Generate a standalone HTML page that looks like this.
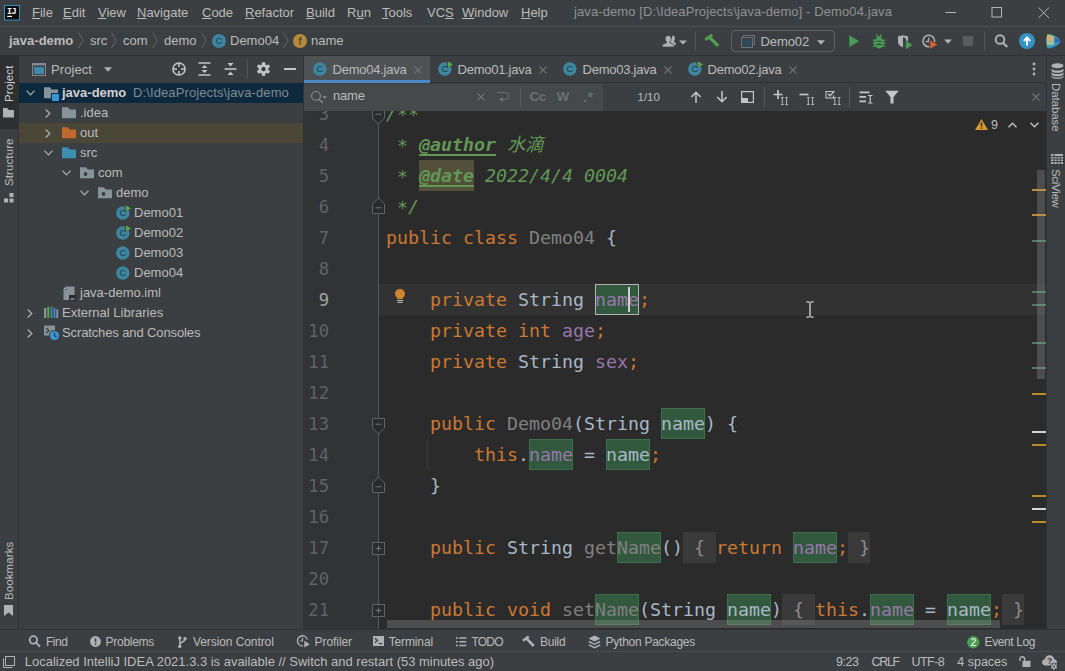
<!DOCTYPE html>
<html><head><meta charset="utf-8"><title>java-demo - Demo04.java</title>
<style>
*{box-sizing:border-box;margin:0;padding:0}
html,body{width:1065px;height:671px;overflow:hidden;background:#3c3f41}
body{position:relative;font-family:"Liberation Sans","Noto Sans CJK SC",sans-serif;font-size:13px;color:#bbbbbb}
.abs{position:absolute}
.t{position:absolute;white-space:nowrap;line-height:16px}
svg{position:absolute;overflow:visible}
u{text-decoration:underline;text-underline-offset:1px}
/* regions */
#menubar{left:0;top:0;width:1065px;height:26px;background:#3c3f41}
#navbar{left:0;top:26px;width:1065px;height:30px;background:#3c3f41;border-top:1px solid #4b4e50;border-bottom:1px solid #323232}
#lstripe{left:0;top:56px;width:19px;height:573px;background:#3c3f41;border-right:1px solid #323232}
#rstripe{left:1046px;top:56px;width:19px;height:573px;background:#3c3f41;border-left:1px solid #323232}
#proj{left:19px;top:56px;width:285px;height:573px;background:#3c3f41;border-right:1px solid #323232}
#tabs{left:304px;top:56px;width:742px;height:27px;background:#3c3f41;border-bottom:1px solid #323232}
#find{left:304px;top:84px;width:742px;height:27px;background:#3c3f41}
#editor{left:304px;top:111px;width:742px;height:518px;background:#2b2b2b;overflow:hidden}
#btools{left:0;top:629px;width:1065px;height:22px;background:#3c3f41;border-top:1px solid #323232}
#status{left:0;top:651px;width:1065px;height:20px;background:#3c3f41;border-top:1px solid #494b4c}
.code{position:absolute;left:82px;white-space:pre;font-family:"DejaVu Sans Mono","Liberation Mono","Noto Sans CJK SC",monospace;font-size:18.27px;line-height:31px;height:31px;color:#a9b7c6}
.ln{position:absolute;left:0;width:25px;text-align:right;white-space:pre;font-family:"DejaVu Sans Mono","Liberation Mono",monospace;font-size:17.2px;line-height:31px;height:31px;color:#606366}
.k{color:#cc7832}.f{color:#9876aa}.g{color:#808080}.d{color:#629755;font-style:italic}
.dt{color:#629755;font-style:italic;font-weight:bold;text-decoration:underline;text-underline-offset:3px;text-decoration-thickness:1.5px}.as{font-weight:normal;position:relative;top:1px}
.m{background:#32593d;outline:1px solid #3d6b48;outline-offset:-1px}
.fbt{color:#8c8c8c}.sh{position:relative;top:0px}.ln span{position:relative;top:1px}.ln.cur{color:#a4a3a3}
</style></head><body>
<div id="menubar" class="abs">
<svg style="left:4px;top:4.500px" width="16" height="16" viewBox="0 0 16 16"><rect x="0" y="0" width="16" height="15.500" fill="#3592c4"/><rect x="1" y="1" width="14" height="13.500" fill="#0b0b0c"/><rect x="3.200" y="10.800" width="4.800" height="1.200" fill="#fff"/><text x="3" y="8.800" font-family="Liberation Mono,monospace" font-weight="bold" font-size="8.400" fill="#fff" letter-spacing="-0.600">IJ</text></svg>
<span class="t" style="left:32px;top:5px"><u>F</u>ile</span>
<span class="t" style="left:63px;top:5px"><u>E</u>dit</span>
<span class="t" style="left:98px;top:5px"><u>V</u>iew</span>
<span class="t" style="left:137px;top:5px"><u>N</u>avigate</span>
<span class="t" style="left:202px;top:5px"><u>C</u>ode</span>
<span class="t" style="left:245px;top:5px"><u>R</u>efactor</span>
<span class="t" style="left:306px;top:5px"><u>B</u>uild</span>
<span class="t" style="left:347px;top:5px">R<u>u</u>n</span>
<span class="t" style="left:382px;top:5px"><u>T</u>ools</span>
<span class="t" style="left:427px;top:5px">VC<u>S</u></span>
<span class="t" style="left:462px;top:5px"><u>W</u>indow</span>
<span class="t" style="left:521px;top:5px"><u>H</u>elp</span>
<span class="t" style="left:574px;top:4px;color:#8f9192;letter-spacing:0.1px">java-demo [D:\IdeaProjects\java-demo] - Demo04.java</span>
<svg style="left:945px;top:5px" width="110" height="16" viewBox="0 0 110 16"><path d="M0.500 7.500H11" stroke="#b4b4b4" stroke-width="1" fill="none"/><rect x="47" y="2.500" width="9.500" height="9.500" stroke="#b4b4b4" stroke-width="1" fill="none"/><path d="M93.500 2.500L104 13M104 2.500L93.500 13" stroke="#b4b4b4" stroke-width="1" fill="none"/></svg>
</div>
<div id="navbar" class="abs">
<span class="t" style="left:9px;top:6px;font-weight:bold">java-demo</span><svg style="left:77px;top:5px" width="8" height="17" viewBox="0 0 8 17"><path d="M1.500 0.500L6 8.300L1.500 16" stroke="#63666a" stroke-width="1" fill="none"/></svg>
<span class="t" style="left:90px;top:6px">src</span><svg style="left:110px;top:5px" width="8" height="17" viewBox="0 0 8 17"><path d="M1.500 0.500L6 8.300L1.500 16" stroke="#63666a" stroke-width="1" fill="none"/></svg>
<span class="t" style="left:123px;top:6px">com</span><svg style="left:151px;top:5px" width="8" height="17" viewBox="0 0 8 17"><path d="M1.500 0.500L6 8.300L1.500 16" stroke="#63666a" stroke-width="1" fill="none"/></svg>
<span class="t" style="left:164px;top:6px">demo</span><svg style="left:200px;top:5px" width="8" height="17" viewBox="0 0 8 17"><path d="M1.500 0.500L6 8.300L1.500 16" stroke="#63666a" stroke-width="1" fill="none"/></svg>
<svg style="left:212px;top:7px" width="14" height="14" viewBox="0 0 14 14"><circle cx="7" cy="7" r="7" fill="#3e86a0"/><text x="7" y="10.3" text-anchor="middle" font-family="Liberation Sans,sans-serif" font-size="9.300" fill="#243b47">C</text></svg>
<span class="t" style="left:230px;top:6px">Demo04</span><svg style="left:282px;top:5px" width="8" height="17" viewBox="0 0 8 17"><path d="M1.500 0.500L6 8.300L1.500 16" stroke="#63666a" stroke-width="1" fill="none"/></svg>
<svg style="left:293px;top:7px" width="14" height="14" viewBox="0 0 14 14"><circle cx="7" cy="7" r="7" fill="#b58a3d"/><text x="7" y="10.700" text-anchor="middle" font-family="Liberation Sans,sans-serif" font-size="11" fill="#43351c">f</text></svg>
<span class="t" style="left:311px;top:6px">name</span>
<!-- right toolbar -->
<svg style="left:661px;top:8px" width="28" height="13" viewBox="0 0 28 13"><path d="M11.800 0.400c1.300 0 2.100 1.300 2.100 3c0 1.100-0.400 2-0.900 2.600v0.800l2.400 2.200l-1.500 1.300l-5-3z" fill="#afb1b3"/><path d="M7.200 0.500c1.800 0 3 1.400 3 3.300c0 1.300-0.500 2.400-1.300 3v1l3.400 1.500c0.600 0.300 0.900 0.800 0.900 1.400V12H1.200v-1.300c0-0.600 0.300-1.100 0.900-1.400l3.400-1.500v-1c-0.800-0.600-1.300-1.700-1.300-3c0-1.900 1.200-3.300 3-3.300z" fill="#afb1b3" stroke="#3c3f41" stroke-width="0.700"/><path d="M18 5.500h8l-4 4z" fill="#afb1b3"/></svg>
<div class="abs" style="left:695px;top:4px;width:1px;height:20px;background:#515456"></div>
<svg style="left:704px;top:7px" width="16" height="14" viewBox="0 0 16 14"><path d="M1.400 5.800L8.300 0.900" stroke="#50a150" stroke-width="3" fill="none"/><path d="M5.800 3.600L14.100 11.800" stroke="#50a150" stroke-width="3.100" fill="none"/></svg>
<div class="abs" style="left:731px;top:3px;width:104px;height:22px;border:1px solid #5e6162;border-radius:4px"></div>
<svg style="left:741px;top:8px" width="14" height="13" viewBox="0 0 14 13"><rect x="2.500" y="0.500" width="11" height="9" fill="none" stroke="#6e7173"/><rect x="0.500" y="2.500" width="11" height="10" fill="#3c3f41" stroke="#6e7173"/><rect x="1.500" y="4.500" width="9" height="7" fill="#2e4a5c"/></svg>
<span class="t" style="left:760.500px;top:7px;letter-spacing:-0.1px">Demo02</span>
<svg style="left:817px;top:13px" width="8" height="5" viewBox="0 0 8 5"><path d="M0 0.300h8l-4 4.400z" fill="#afb1b3"/></svg>
<svg style="left:849px;top:8px" width="10.500" height="12.400" viewBox="0 0 11 13" preserveAspectRatio="none"><path d="M0.300 0.300L10.600 6.500L0.300 12.700z" fill="#499c54"/></svg>
<svg style="left:872px;top:7px" width="14" height="15" viewBox="0 0 14 15"><path d="M4.200 0.400l1.700 2.300M9.800 0.400l-1.700 2.300" stroke="#499c54" stroke-width="1.200"/><ellipse cx="7" cy="9.100" rx="4.700" ry="5.300" fill="#499c54"/><path d="M4.600 2.400h4.800v2.800h-4.800z" fill="#499c54"/><path d="M0.900 6.200h2M0.900 9.200h2M0.900 12.200h2M11.100 6.200h2M11.100 9.200h2M11.100 12.200h2" stroke="#499c54" stroke-width="1.400"/><path d="M4.600 7.300h4.800M4.600 10.400h4.800" stroke="#3c3f41" stroke-width="1.100"/></svg>
<svg style="left:897px;top:8px" width="17" height="15" viewBox="0 0 17 15"><path d="M1 1.200C3 1 4.500 0.700 6 0.200C7.500 0.700 9 1 11 1.200V7c0 2.500-2.300 4.300-5 5.300C3.300 11.300 1 9.500 1 7z" fill="#afb1b3"/><path d="M6 2.300c1 0.300 1.700 0.500 2.800 0.600V11c-0.800 0.500-1.800 1-2.800 1.300z" fill="#3c3f41"/><path d="M8.500 5.300L16.300 10L8.500 14.700z" fill="#499c54" stroke="#3c3f41" stroke-width="0.800"/></svg>
<svg style="left:922px;top:7px" width="32" height="16" viewBox="0 0 32 16"><circle cx="6.800" cy="7" r="5.800" fill="none" stroke="#afb1b3" stroke-width="1.500"/><path d="M6.800 3.500V7.500H3.800" stroke="#afb1b3" stroke-width="1.300" fill="none"/><path d="M7.800 5.800L15.800 10.500L7.800 15.300z" fill="#d9622b" stroke="#3c3f41" stroke-width="0.800"/><path d="M22 5.500h8l-4 4.300z" fill="#afb1b3"/></svg>
<div class="abs" style="left:963px;top:9px;width:10px;height:10px;background:#5a5c5d"></div>
<div class="abs" style="left:984px;top:4px;width:1px;height:20px;background:#515456"></div>
<svg style="left:993px;top:7px" width="16" height="15" viewBox="0 0 16 15"><circle cx="7" cy="5.500" r="4.300" fill="none" stroke="#afb1b3" stroke-width="1.900"/><path d="M10 8.700L14.300 13.100" stroke="#afb1b3" stroke-width="2.100"/></svg>
<svg style="left:1019px;top:6px" width="16" height="16" viewBox="0 0 16 16"><circle cx="8" cy="8" r="8" fill="#3592c4"/><path d="M8 12.500V5M4.800 8L8 4.500L11.200 8" stroke="#fff" stroke-width="1.900" fill="none"/></svg>
<svg style="left:1046px;top:7px" width="15" height="15" viewBox="0 0 15 15"><path d="M1.500 0.300C6 -0.300 12.500 2.500 14.500 7.300C12.500 11.500 6 14.800 1.500 14.300C0 10 0 5 1.500 0.300z" fill="#2d9bd8"/><path d="M1.500 0.300C4 0.200 7 1.500 8.300 3.300C8.800 5 8.800 6 8.500 7.500L0.500 7.500C0.400 5 0.700 2.500 1.500 0.300z" fill="#c9b27c"/><path d="M0.500 7.500L8.500 7.500C8.300 9 7.800 10 7 11L1 11.500z" fill="#a7c194"/><path d="M1 11.500L7 11C5.500 12.800 3.500 13.800 1.500 14.300z" fill="#3aa0a8"/><path d="M8.300 3.300C10.500 4 13 5.500 14.500 7.300C13 8.500 11 9 8.500 8.500z" fill="#2d6fb5"/><path d="M1.500 0.300C4 0.200 6.500 1 8 2.500" stroke="#3f9a5a" stroke-width="0.800" fill="none"/></svg>
</div>
<div id="lstripe" class="abs"></div>
<!-- left stripe content -->
<div class="abs" style="left:0;top:56px;width:19px;height:73px;background:#2d2f30"></div>
<span class="t" style="left:2px;top:65px;width:14px;height:37px;line-height:14px;font-size:11.5px;writing-mode:vertical-rl;transform:rotate(180deg);color:#d0d0d0;letter-spacing:0.1px">Project</span>
<svg style="left:3px;top:108px" width="11" height="9.500" viewBox="0 0 12 10" preserveAspectRatio="none"><path d="M0 0H4.500L6.300 2H12V10H0z" fill="#afb1b3"/></svg>
<span class="t" style="left:2px;top:138px;width:14px;height:48px;line-height:14px;font-size:11.5px;writing-mode:vertical-rl;transform:rotate(180deg);letter-spacing:0.1px">Structure</span>
<svg style="left:4px;top:193px" width="10" height="10" viewBox="0 0 10 10"><rect x="5.500" y="0" width="4" height="4" fill="#afb1b3"/><rect x="0" y="5.500" width="4" height="4" fill="#afb1b3"/><rect x="5.500" y="5.500" width="4" height="4" fill="#afb1b3"/></svg>
<span class="t" style="left:1.700px;top:541px;width:14px;height:59px;line-height:14px;font-size:11.5px;writing-mode:vertical-rl;transform:rotate(180deg);letter-spacing:0.1px">Bookmarks</span>
<svg style="left:4px;top:605px" width="9" height="11" viewBox="0 0 8 11" preserveAspectRatio="none"><path d="M0 0H8V11L4 7.500L0 11z" fill="#afb1b3"/></svg>
<div id="proj" class="abs"></div>
<!-- project panel content -->
<div class="abs" style="left:19px;top:83px;width:284px;height:20px;background:#0d293e"></div>
<div class="abs" style="left:19px;top:123px;width:284px;height:20px;background:#4a4638"></div>
<svg style="left:32px;top:63px" width="14" height="13" viewBox="0 0 14 13"><rect x="0.500" y="0.500" width="13" height="12" fill="none" stroke="#7f8b91"/><rect x="0.500" y="0.500" width="13" height="2" fill="#7f8b91"/><rect x="2" y="4" width="10" height="7" fill="#3f8aab"/></svg>
<span class="t" style="left:51px;top:62px;letter-spacing:0.08px">Project</span>
<svg style="left:104px;top:67px" width="8" height="5" viewBox="0 0 8 5"><path d="M0 0.300h8l-4 4.400z" fill="#afb1b3"/></svg>
<svg style="left:172px;top:62px" width="14" height="14" viewBox="0 0 14 14"><circle cx="7" cy="7" r="6.100" fill="none" stroke="#c3c5c6" stroke-width="1.500"/><path d="M7 1V5M7 9V13M1 7H5M9 7H13" stroke="#c3c5c6" stroke-width="1.500"/></svg>
<svg style="left:198px;top:62px" width="13" height="14" viewBox="0 0 13 14"><path d="M0.500 1H12.500M0.500 13H12.500" stroke="#c3c5c6" stroke-width="1.600"/><path d="M3.500 6L6.500 3L9.500 6zM3.500 8L6.500 11L9.500 8z" fill="#c3c5c6"/></svg>
<svg style="left:224px;top:62px" width="13" height="14" viewBox="0 0 13 14"><path d="M0.500 7H12.500" stroke="#c3c5c6" stroke-width="1.600"/><path d="M3.500 1L6.500 4.500L9.500 1zM3.500 13L6.500 9.500L9.500 13z" fill="#c3c5c6"/></svg>
<div class="abs" style="left:247px;top:59px;width:1px;height:20px;background:#515456"></div>
<svg style="left:257px;top:62px" width="13" height="14" viewBox="0 0 13 14"><g transform="translate(6.500 7)"><g fill="#c3c5c6"><rect x="-1.700" y="-6.800" width="3.400" height="13.600" rx="0.600"/><rect x="-1.700" y="-6.800" width="3.400" height="13.600" rx="0.600" transform="rotate(60)"/><rect x="-1.700" y="-6.800" width="3.400" height="13.600" rx="0.600" transform="rotate(120)"/><circle r="4.800"/></g><circle r="2.200" fill="#3c3f41"/></g></svg>
<div class="abs" style="left:284px;top:68px;width:12px;height:2px;background:#c3c5c6"></div>
<svg style="left:26px;top:90px" width="9" height="6" viewBox="0 0 9 6"><path d="M0.500 0.700L4.500 4.800L8.500 0.700" stroke="#afb1b3" stroke-width="1.200" fill="none"/></svg>
<svg style="left:44px;top:87px" width="14" height="12" viewBox="0 0 14 12"><path d="M0 0.300H5.800L7.800 2.600H14V11.300H0z" fill="#87939a"/><rect x="7" y="6" width="8" height="8" fill="#0d293e"/><rect x="8" y="7" width="7" height="7" fill="#3a95d6"/></svg>
<span class="t" style="left:62px;top:85px;font-weight:bold;color:#d0d0d0">java-demo</span>
<span class="t" style="left:133px;top:85px;color:#7f8b91;letter-spacing:0.11px">D:\IdeaProjects\java-demo</span>
<svg style="left:45px;top:109px" width="6" height="9" viewBox="0 0 6 9"><path d="M0.700 0.500L4.800 4.500L0.700 8.500" stroke="#afb1b3" stroke-width="1.200" fill="none"/></svg>
<svg style="left:62px;top:107px" width="14" height="12" viewBox="0 0 14 12"><path d="M0 0.300H5.800L7.800 2.600H14V11.300H0z" fill="#87939a"/></svg>
<span class="t" style="left:80px;top:105px;">.idea</span>
<svg style="left:45px;top:129px" width="6" height="9" viewBox="0 0 6 9"><path d="M0.700 0.500L4.800 4.500L0.700 8.500" stroke="#afb1b3" stroke-width="1.200" fill="none"/></svg>
<svg style="left:62px;top:127px" width="14" height="12" viewBox="0 0 14 12"><path d="M0 0.300H5.800L7.800 2.600H14V11.300H0z" fill="#c0682f"/></svg>
<span class="t" style="left:80px;top:125px;">out</span>
<svg style="left:44px;top:150px" width="9" height="6" viewBox="0 0 9 6"><path d="M0.500 0.700L4.500 4.800L8.500 0.700" stroke="#afb1b3" stroke-width="1.200" fill="none"/></svg>
<svg style="left:62px;top:147px" width="14" height="12" viewBox="0 0 14 12"><path d="M0 0.300H5.800L7.800 2.600H14V11.300H0z" fill="#3d8eb1"/></svg>
<span class="t" style="left:80px;top:145px;">src</span>
<svg style="left:62px;top:170px" width="9" height="6" viewBox="0 0 9 6"><path d="M0.500 0.700L4.500 4.800L8.500 0.700" stroke="#afb1b3" stroke-width="1.200" fill="none"/></svg>
<svg style="left:80px;top:167px" width="14" height="12" viewBox="0 0 14 12"><path d="M0 0.300H5.800L7.800 2.600H14V11.300H0z" fill="#87939a"/><circle cx="5.500" cy="7" r="1.900" fill="#3c3f41"/></svg>
<span class="t" style="left:98px;top:165px;">com</span>
<svg style="left:80px;top:190px" width="9" height="6" viewBox="0 0 9 6"><path d="M0.500 0.700L4.500 4.800L8.500 0.700" stroke="#afb1b3" stroke-width="1.200" fill="none"/></svg>
<svg style="left:98px;top:187px" width="14" height="12" viewBox="0 0 14 12"><path d="M0 0.300H5.800L7.800 2.600H14V11.300H0z" fill="#87939a"/><circle cx="5.500" cy="7" r="1.900" fill="#3c3f41"/></svg>
<span class="t" style="left:116px;top:185px;">demo</span>
<svg style="left:116px;top:205.3px" width="15" height="15" viewBox="0 0 15 15"><circle cx="6.800" cy="8" r="6.700" fill="#3e86a0"/><text x="6.800" y="11.300" text-anchor="middle" font-family="Liberation Sans,sans-serif" font-size="9.300" fill="#243b47">C</text><path d="M8.800 0L15 3.600L8.800 7.200z" fill="#3c3f41"/><path d="M9.800 0.200L15 3.500L9.800 6.600z" fill="#57a64a"/></svg>
<span class="t" style="left:134px;top:205px;">Demo01</span>
<svg style="left:116px;top:225.3px" width="15" height="15" viewBox="0 0 15 15"><circle cx="6.800" cy="8" r="6.700" fill="#3e86a0"/><text x="6.800" y="11.300" text-anchor="middle" font-family="Liberation Sans,sans-serif" font-size="9.300" fill="#243b47">C</text><path d="M8.800 0L15 3.600L8.800 7.200z" fill="#3c3f41"/><path d="M9.800 0.200L15 3.500L9.800 6.600z" fill="#57a64a"/></svg>
<span class="t" style="left:134px;top:225px;">Demo02</span>
<svg style="left:116px;top:245.3px" width="15" height="15" viewBox="0 0 15 15"><circle cx="6.800" cy="8" r="6.700" fill="#3e86a0"/><text x="6.800" y="11.300" text-anchor="middle" font-family="Liberation Sans,sans-serif" font-size="9.300" fill="#243b47">C</text></svg>
<span class="t" style="left:134px;top:245px;">Demo03</span>
<svg style="left:116px;top:265.3px" width="15" height="15" viewBox="0 0 15 15"><circle cx="6.800" cy="8" r="6.700" fill="#3e86a0"/><text x="6.800" y="11.300" text-anchor="middle" font-family="Liberation Sans,sans-serif" font-size="9.300" fill="#243b47">C</text></svg>
<span class="t" style="left:134px;top:265px;">Demo04</span>
<svg style="left:62px;top:286px" width="14" height="15" viewBox="0 0 14 15"><path d="M5 0.500H12.500V14H1.500V4z" fill="#87939a"/><path d="M1.500 4L5 0.500V4z" fill="#3c3f41"/><path d="M1 3.500L4.500 0V3.500z" fill="#a5b0b6"/><rect x="7" y="9" width="7" height="6" fill="#2b2b2b"/><rect x="8.500" y="12.500" width="4" height="1" fill="#d0d0d0"/></svg>
<span class="t" style="left:80px;top:285px;">java-demo.iml</span>
<svg style="left:27px;top:309px" width="6" height="9" viewBox="0 0 6 9"><path d="M0.700 0.500L4.800 4.500L0.700 8.500" stroke="#afb1b3" stroke-width="1.200" fill="none"/></svg>
<svg style="left:44px;top:306px" width="15" height="13" viewBox="0 0 15 13"><rect x="0" y="2" width="2.200" height="10" fill="#87939a"/><rect x="3.200" y="0.700" width="2.200" height="11.300" fill="#62a043"/><rect x="6.800" y="0.700" width="1.600" height="11.300" fill="#3a8fc4"/><rect x="9.500" y="2" width="1.900" height="10" fill="#3a8fc4"/><rect x="12.300" y="3.500" width="1.900" height="8.500" fill="#87939a"/></svg>
<span class="t" style="left:62px;top:305px;">External Libraries</span>
<svg style="left:27px;top:329px" width="6" height="9" viewBox="0 0 6 9"><path d="M0.700 0.500L4.800 4.500L0.700 8.500" stroke="#afb1b3" stroke-width="1.200" fill="none"/></svg>
<svg style="left:44px;top:325px" width="16" height="16" viewBox="0 0 16 16"><rect x="0" y="0.500" width="11" height="10" fill="#87939a"/><path d="M2 3L5 5.500L2 8" stroke="#3c3f41" stroke-width="1.300" fill="none"/><path d="M6 8.500H9" stroke="#3c3f41" stroke-width="1.300"/><circle cx="10.500" cy="10.500" r="5.500" fill="#3c3f41"/><circle cx="10.500" cy="10.500" r="4.600" fill="#3a95d6"/><path d="M10.500 7.500V10.800L12.500 12" stroke="#3c3f41" stroke-width="1.200" fill="none"/></svg>
<span class="t" style="left:62px;top:325px;letter-spacing:-0.12px">Scratches and Consoles</span>

<div id="tabs" class="abs"></div>
<!-- tabs content -->
<div class="abs" style="left:304px;top:56px;width:126px;height:26px;background:#4e5254"></div>
<div class="abs" style="left:304px;top:80px;width:126px;height:3px;background:#4a88c7"></div>
<svg style="left:313px;top:61px" width="15" height="15" viewBox="0 0 15 15"><circle cx="6.800" cy="8" r="6.700" fill="#3e86a0"/><text x="6.800" y="11.300" text-anchor="middle" font-family="Liberation Sans,sans-serif" font-size="9.300" fill="#243b47">C</text></svg>
<span class="t" style="left:332.5px;top:62px;letter-spacing:-0.24px">Demo04.java</span>
<svg style="left:413.8px;top:65.5px" width="8" height="8" viewBox="0 0 8 8"><path d="M0.500 0.500L7.500 7.500M7.500 0.500L0.500 7.500" stroke="#6e7173" stroke-width="1.100"/></svg>
<svg style="left:438px;top:61px" width="15" height="15" viewBox="0 0 15 15"><circle cx="6.800" cy="8" r="6.700" fill="#3e86a0"/><text x="6.800" y="11.300" text-anchor="middle" font-family="Liberation Sans,sans-serif" font-size="9.300" fill="#243b47">C</text><path d="M8.800 0L15 3.600L8.800 7.200z" fill="#3c3f41"/><path d="M9.800 0.200L15 3.500L9.800 6.600z" fill="#57a64a"/></svg>
<span class="t" style="left:457.5px;top:62px;letter-spacing:-0.24px">Demo01.java</span>
<svg style="left:538.8px;top:65.5px" width="8" height="8" viewBox="0 0 8 8"><path d="M0.500 0.500L7.500 7.500M7.500 0.500L0.500 7.500" stroke="#6e7173" stroke-width="1.100"/></svg>
<svg style="left:563px;top:61px" width="15" height="15" viewBox="0 0 15 15"><circle cx="6.800" cy="8" r="6.700" fill="#3e86a0"/><text x="6.800" y="11.300" text-anchor="middle" font-family="Liberation Sans,sans-serif" font-size="9.300" fill="#243b47">C</text></svg>
<span class="t" style="left:582.5px;top:62px;letter-spacing:-0.24px">Demo03.java</span>
<svg style="left:663.8px;top:65.5px" width="8" height="8" viewBox="0 0 8 8"><path d="M0.500 0.500L7.500 7.500M7.500 0.500L0.500 7.500" stroke="#6e7173" stroke-width="1.100"/></svg>
<svg style="left:688px;top:61px" width="15" height="15" viewBox="0 0 15 15"><circle cx="6.800" cy="8" r="6.700" fill="#3e86a0"/><text x="6.800" y="11.300" text-anchor="middle" font-family="Liberation Sans,sans-serif" font-size="9.300" fill="#243b47">C</text><path d="M8.800 0L15 3.600L8.800 7.200z" fill="#3c3f41"/><path d="M9.800 0.200L15 3.500L9.800 6.600z" fill="#57a64a"/></svg>
<span class="t" style="left:707.5px;top:62px;letter-spacing:-0.24px">Demo02.java</span>
<svg style="left:788.8px;top:65.5px" width="8" height="8" viewBox="0 0 8 8"><path d="M0.500 0.500L7.500 7.500M7.500 0.500L0.500 7.500" stroke="#6e7173" stroke-width="1.100"/></svg>
<svg style="left:1032px;top:62px" width="4" height="14" viewBox="0 0 4 14"><circle cx="2" cy="2" r="1.400" fill="#afb1b3"/><circle cx="2" cy="7" r="1.400" fill="#afb1b3"/><circle cx="2" cy="12" r="1.400" fill="#afb1b3"/></svg>
<div id="find" class="abs"></div>
<!-- find content -->
<div class="abs" style="left:304px;top:84px;width:299px;height:27px;background:#45494a"></div>
<svg style="left:310px;top:90px" width="18" height="14" viewBox="0 0 18 14"><circle cx="6" cy="5.900" r="4.400" fill="none" stroke="#8c8f92" stroke-width="1.100"/><path d="M9.100 9.200L12.800 12.800" stroke="#8c8f92" stroke-width="1.200"/><path d="M12.500 6.200h4.400l-2.200 2.600z" fill="#8c8f92"/></svg>
<span class="t" style="left:333px;top:88px;letter-spacing:-0.2px">name</span>
<svg style="left:477px;top:93px" width="8" height="8" viewBox="0 0 8 8"><path d="M0.500 0.500L7.500 7.500M7.500 0.500L0.500 7.500" stroke="#6e7173" stroke-width="1.100"/></svg>
<svg style="left:497px;top:91px" width="13" height="12" viewBox="0 0 13 12"><path d="M0.300 1.500H8.500A3.500 3.500 0 0 1 8.500 8.500H5.700" stroke="#6c7173" stroke-width="1" fill="none"/><path d="M2 8.500L5.900 5.900V11.100z" fill="#6c7173"/></svg>
<div class="abs" style="left:520px;top:87px;width:1px;height:20px;background:#565a5c"></div>
<span class="t" style="left:529.500px;top:89px;font-size:13.500px;font-weight:bold;color:#6b6f71;letter-spacing:-0.5px">Cc</span>
<span class="t" style="left:556.500px;top:89px;font-size:13.500px;font-weight:bold;color:#6b6f71">W</span>
<span class="t" style="left:583px;top:89px;font-size:14px;font-weight:bold;color:#6b6f71;letter-spacing:0.5px">.*</span>
<span class="t" style="left:637.500px;top:89px;font-size:11.500px">1/10</span>
<svg style="left:690px;top:91px" width="12" height="12" viewBox="0 0 12 12"><path d="M6 12V1.500M1.300 6L6 1.200L10.700 6" stroke="#c3c5c6" stroke-width="1.500" fill="none"/></svg>
<svg style="left:716px;top:91px" width="12" height="12" viewBox="0 0 12 12"><path d="M6 0V10.500M1.300 6L6 10.800L10.700 6" stroke="#c3c5c6" stroke-width="1.500" fill="none"/></svg>
<svg style="left:741px;top:91px" width="13" height="12" viewBox="0 0 13 12"><rect x="0.600" y="0.600" width="11.800" height="10.800" fill="none" stroke="#c3c5c6" stroke-width="1.200"/><rect x="1" y="7" width="6" height="4.500" fill="#c3c5c6"/></svg>
<div class="abs" style="left:764px;top:87px;width:1px;height:20px;background:#565a5c"></div>
<svg style="left:773px;top:90px" width="17" height="15" viewBox="0 0 17 15"><path d="M0.500 4.500H9.500M5 0V9" stroke="#c3c5c6" stroke-width="1.700"/><path d="M8 7.500h2.600M8 14.500h2.600M9.3 7.500V14.500M12.3 7.500h2.600M12.3 14.500h2.600M13.6 7.500V14.500" stroke="#c3c5c6" stroke-width="0.900" fill="none"/></svg>
<svg style="left:799px;top:90px" width="17" height="15" viewBox="0 0 17 15"><path d="M0.500 4.500H9.500" stroke="#c3c5c6" stroke-width="1.700"/><path d="M8 7.500h2.600M8 14.500h2.600M9.3 7.500V14.500M12.3 7.500h2.600M12.3 14.500h2.600M13.6 7.500V14.500" stroke="#c3c5c6" stroke-width="0.900" fill="none"/></svg>
<svg style="left:825px;top:90px" width="17" height="15" viewBox="0 0 17 15"><path d="M8 1.500H1V8H8.500V5.500" stroke="#c3c5c6" stroke-width="1.100" fill="none"/><path d="M3 3.800L5 5.800L9.500 1" stroke="#c3c5c6" stroke-width="1.300" fill="none"/><path d="M8.5 7.500h2.600M8.5 14.500h2.600M9.8 7.500V14.500M12.8 7.500h2.600M12.8 14.500h2.600M14.1 7.500V14.500" stroke="#c3c5c6" stroke-width="0.900" fill="none"/></svg>
<div class="abs" style="left:849px;top:87px;width:1px;height:20px;background:#565a5c"></div>
<svg style="left:859px;top:91px" width="15" height="13" viewBox="0 0 15 13"><path d="M0.500 1.300H10.500M0.500 5.800H7M0.500 10.300H7" stroke="#c3c5c6" stroke-width="1.700"/><path d="M9 4.500H13.500M9 12H13.500M11.250 4.500V12" stroke="#c3c5c6" stroke-width="1.200"/></svg>
<svg style="left:885px;top:90px" width="14" height="14" viewBox="0 0 14 14"><path d="M0.300 0.800H13.700L8.500 7V13.500H5.500V7z" fill="#c3c5c6"/></svg>
<svg style="left:1031.500px;top:93px" width="8" height="8" viewBox="0 0 8 8"><path d="M0.500 0.500L7.500 7.500M7.500 0.500L0.500 7.500" stroke="#6e7173" stroke-width="1.100"/></svg>
<div id="editor" class="abs">
<div class="abs" style="left:0;top:0;width:74px;height:518px;background:#313335"></div>
<div class="abs" style="left:74px;top:173px;width:668px;height:31px;background:#323232"></div>
<div class="abs" style="left:0;top:173px;width:74px;height:31px;background:#323335"></div>
<div class="abs" style="left:115px;top:49px;width:55px;height:31px;background:#52503a"></div>
<div class="abs" style="left:379px;top:421px;width:33px;height:31px;background:#3a3a3a"></div>
<div class="abs" style="left:544px;top:421px;width:22px;height:31px;background:#3a3a3a"></div>
<div class="abs" style="left:478px;top:483px;width:33px;height:31px;background:#3a3a3a"></div>
<div class="abs" style="left:698px;top:483px;width:22px;height:31px;background:#3a3a3a"></div>
<div class="abs" style="left:291px;top:173px;width:44px;height:31px;background:#32593d;border:1px solid #b4b4b4"></div>
<div class="abs" style="left:357px;top:297px;width:44px;height:31px;background:#32593d;border:1px solid #3c704a"></div>
<div class="abs" style="left:225px;top:328px;width:44px;height:31px;background:#32593d;border:1px solid #3c704a"></div>
<div class="abs" style="left:302px;top:328px;width:44px;height:31px;background:#32593d;border:1px solid #3c704a"></div>
<div class="abs" style="left:313px;top:421px;width:44px;height:31px;background:#32593d;border:1px solid #3c704a"></div>
<div class="abs" style="left:489px;top:421px;width:44px;height:31px;background:#32593d;border:1px solid #3c704a"></div>
<div class="abs" style="left:291px;top:483px;width:44px;height:31px;background:#32593d;border:1px solid #3c704a"></div>
<div class="abs" style="left:423px;top:483px;width:44px;height:31px;background:#32593d;border:1px solid #3c704a"></div>
<div class="abs" style="left:566px;top:483px;width:44px;height:31px;background:#32593d;border:1px solid #3c704a"></div>
<div class="abs" style="left:643px;top:483px;width:44px;height:31px;background:#32593d;border:1px solid #3c704a"></div>
<div class="abs" style="left:123px;top:328px;width:1px;height:31px;background:#3b3b3b"></div>
<div class="ln" style="top:-13px"><span>3</span></div>
<div class="code" style="top:-13px"><span class="sh"><span class="d">/<b class="as">**</b></span></span></div>
<div class="ln" style="top:18px"><span>4</span></div>
<div class="code" style="top:18px"><span class="sh"><span class="d"> <b class="as">*</b> </span><span class="dt">@author</span><span class="d"> 水滴</span></span></div>
<div class="ln" style="top:49px"><span>5</span></div>
<div class="code" style="top:49px"><span class="sh"><span class="d"> <b class="as">*</b> </span><span class="dt">@date</span><span class="d"> 2022/4/4 0004</span></span></div>
<div class="ln" style="top:80px"><span>6</span></div>
<div class="code" style="top:80px"><span class="sh"><span class="d"> <b class="as">*</b>/</span></span></div>
<div class="ln" style="top:111px"><span>7</span></div>
<div class="code" style="top:111px"><span class="sh"><span class="k">public class </span><span class="g">Demo04</span> {</span></div>
<div class="ln" style="top:142px"><span>8</span></div>
<div class="ln cur" style="top:173px"><span>9</span></div>
<div class="code" style="top:173px"><span class="sh">    <span class="k">private </span>String <span class="f">name</span><span class="k">;</span></span></div>
<div class="ln" style="top:204px"><span>10</span></div>
<div class="code" style="top:204px"><span class="sh">    <span class="k">private int </span><span class="f">age</span><span class="k">;</span></span></div>
<div class="ln" style="top:235px"><span>11</span></div>
<div class="code" style="top:235px"><span class="sh">    <span class="k">private </span>String <span class="f">sex</span><span class="k">;</span></span></div>
<div class="ln" style="top:266px"><span>12</span></div>
<div class="ln" style="top:297px"><span>13</span></div>
<div class="code" style="top:297px"><span class="sh">    <span class="k">public </span><span class="g">Demo04</span>(String name) {</span></div>
<div class="ln" style="top:328px"><span>14</span></div>
<div class="code" style="top:328px"><span class="sh">        <span class="k">this</span>.<span class="f">name</span> = name<span class="k">;</span></span></div>
<div class="ln" style="top:359px"><span>15</span></div>
<div class="code" style="top:359px"><span class="sh">    }</span></div>
<div class="ln" style="top:390px"><span>16</span></div>
<div class="ln" style="top:421px"><span>17</span></div>
<div class="code" style="top:421px"><span class="sh">    <span class="k">public </span>String <span class="g">getName</span>() <span class="fbt">{ </span><span class="k">return </span><span class="f">name</span><span class="k">;</span><span class="fbt"> }</span></span></div>
<div class="ln" style="top:452px"><span>20</span></div>
<div class="ln" style="top:483px"><span>21</span></div>
<div class="code" style="top:483px"><span class="sh">    <span class="k">public void </span><span class="g">setName</span>(String name) <span class="fbt">{ </span><span class="k">this</span>.<span class="f">name</span> = name<span class="k">;</span><span class="fbt"> }</span></span></div>
<div class="abs" style="left:74px;top:0;width:1px;height:518px;background:#555759"></div>
<svg style="left:68px;top:-3px" width="13" height="17" viewBox="0 0 13 17"><path d="M0.500 0.500H12.500V10L6.500 16L0.500 10z" fill="#2b2b2b" stroke="#606366" stroke-width="1"/><path d="M3.500 6.200H9.500" stroke="#707274" stroke-width="1"/></svg>
<svg style="left:68px;top:86px" width="13" height="17" viewBox="0 0 13 17"><path d="M0.500 16.500H12.500V7L6.500 1L0.500 7z" fill="#2b2b2b" stroke="#606366" stroke-width="1"/><path d="M3.500 10.800H9.500" stroke="#707274" stroke-width="1"/></svg>
<svg style="left:68px;top:307px" width="13" height="17" viewBox="0 0 13 17"><path d="M0.500 0.500H12.500V10L6.500 16L0.500 10z" fill="#2b2b2b" stroke="#606366" stroke-width="1"/><path d="M3.500 6.200H9.500" stroke="#707274" stroke-width="1"/></svg>
<svg style="left:68px;top:365px" width="13" height="17" viewBox="0 0 13 17"><path d="M0.500 16.500H12.500V7L6.500 1L0.500 7z" fill="#2b2b2b" stroke="#606366" stroke-width="1"/><path d="M3.500 10.800H9.500" stroke="#707274" stroke-width="1"/></svg>
<svg style="left:68px;top:431px" width="13" height="13" viewBox="0 0 13 13"><rect x="0.500" y="0.500" width="12" height="12" fill="#2b2b2b" stroke="#606366" stroke-width="1"/><path d="M3.500 6.500H9.500M6.500 3.500V9.500" stroke="#707274" stroke-width="1"/></svg>
<svg style="left:68px;top:493px" width="13" height="13" viewBox="0 0 13 13"><rect x="0.500" y="0.500" width="12" height="12" fill="#2b2b2b" stroke="#606366" stroke-width="1"/><path d="M3.500 6.500H9.500M6.500 3.500V9.500" stroke="#707274" stroke-width="1"/></svg>
<svg style="left:91px;top:178px" width="10" height="14" viewBox="0 0 10 14"><path d="M5 0C7.800 0 10 2.100 10 4.800C10 6.600 9 7.800 8 8.800L7.600 10H2.400L2 8.800C1 7.800 0 6.600 0 4.800C0 2.100 2.200 0 5 0z" fill="#cc8430"/><path d="M2 11.500H8.200M2.500 13.400H7.700" stroke="#c4c4c4" stroke-width="1"/></svg>
<div class="abs" style="left:324px;top:176px;width:2px;height:25px;background:#d0d0d0"></div>
<svg style="left:671px;top:8px" width="13" height="11" viewBox="0 0 13 11"><path d="M6.500 0L13 11H0z" fill="#d9982d"/><path d="M6.500 3.500V7.200M6.500 8.300V9.800" stroke="#2b2b2b" stroke-width="1.500"/></svg>
<span class="t" style="left:687px;top:6px;font-size:12.500px">9</span>
<svg style="left:704px;top:11px" width="9" height="6" viewBox="0 0 9 6"><path d="M0.500 5.300L4.500 1.200L8.500 5.300" stroke="#c3c5c6" stroke-width="1.300" fill="none"/></svg>
<svg style="left:725.5px;top:11px" width="9" height="6" viewBox="0 0 9 6"><path d="M0.500 0.700L4.500 4.800L8.500 0.700" stroke="#c3c5c6" stroke-width="1.300" fill="none"/></svg>
<div class="abs" style="left:728px;top:78px;width:14px;height:2px;background:#c08a2c"></div>
<div class="abs" style="left:728px;top:103px;width:14px;height:2px;background:#c08a2c"></div>
<div class="abs" style="left:728px;top:129px;width:14px;height:2px;background:#4f7a62"></div>
<div class="abs" style="left:728px;top:180px;width:14px;height:2px;background:#4f7a62"></div>
<div class="abs" style="left:728px;top:193px;width:14px;height:2px;background:#4f7a62"></div>
<div class="abs" style="left:728px;top:231px;width:14px;height:2px;background:#4f7a62"></div>
<div class="abs" style="left:728px;top:256px;width:14px;height:2px;background:#4f7a62"></div>
<div class="abs" style="left:728px;top:282px;width:14px;height:2px;background:#c08a2c"></div>
<div class="abs" style="left:728px;top:320px;width:14px;height:2px;background:#d6d6d6"></div>
<div class="abs" style="left:728px;top:333px;width:14px;height:2px;background:#c08a2c"></div>
<div class="abs" style="left:728px;top:384px;width:14px;height:2px;background:#c08a2c"></div>
<div class="abs" style="left:728px;top:397px;width:14px;height:2px;background:#d6d6d6"></div>
<div class="abs" style="left:728px;top:410px;width:14px;height:2px;background:#c08a2c"></div>
<div class="abs" style="left:733px;top:59px;width:8px;height:209px;background:rgba(166,166,166,0.28)"></div>
<div class="abs" style="left:83px;top:509px;width:613px;height:8px;background:rgba(166,166,166,0.28)"></div>
<svg style="left:502px;top:190px" width="8" height="17" viewBox="0 0 8 17"><path d="M0.500 0.800H3.200M4.800 0.800H7.500M0.500 16.200H3.200M4.800 16.200H7.500M4 1V16" stroke="#d8d8d8" stroke-width="1.300" fill="none"/></svg>
</div>
<div id="rstripe" class="abs"></div>
<!-- right stripe content -->
<svg style="left:1051px;top:63px" width="13" height="16" viewBox="0 0 13 16"><ellipse cx="6.500" cy="2.800" rx="6" ry="2.500" fill="#afb1b3"/><path d="M0.500 5.200c0 1.400 2.700 2.400 6 2.400s6-1 6-2.400v2.200c0 1.400-2.700 2.400-6 2.400s-6-1-6-2.400zM0.500 8.700c0 1.400 2.700 2.400 6 2.400s6-1 6-2.400v2.200c0 1.400-2.700 2.400-6 2.400s-6-1-6-2.400zM0.500 12.200c0 1.400 2.700 2.400 6 2.400s6-1 6-2.400v1.200c0 1.400-2.700 2.400-6 2.400s-6-1-6-2.400z" fill="#afb1b3"/></svg>
<span class="t" style="left:1049px;top:83px;width:14px;height:50px;line-height:14px;font-size:11.500px;writing-mode:vertical-rl;letter-spacing:-0.1px">Database</span>
<svg style="left:1051px;top:154px" width="12" height="10" viewBox="0 0 12 10"><path d="M0 0H12V10H0z" fill="#afb1b3"/><path d="M0 2.500H12M0 5H12M0 7.500H12M3 0V10M6.200 2.500V10M9.200 2.500V10" stroke="#3c3f41" stroke-width="1"/></svg>
<span class="t" style="left:1049px;top:169px;width:14px;height:40px;line-height:14px;font-size:11.500px;writing-mode:vertical-rl;letter-spacing:-0.3px">SciView</span>
<div id="btools" class="abs"></div>
<div id="status" class="abs"></div>
<!-- bottom content -->
<svg style="left:28px;top:635px" width="13" height="13" viewBox="0 0 13 13"><circle cx="5.400" cy="4.900" r="3.700" fill="none" stroke="#afb1b3" stroke-width="1.800"/><path d="M8 7.600L12 11.600" stroke="#afb1b3" stroke-width="2"/></svg>
<svg style="left:89.500px;top:636px" width="11" height="11" viewBox="0 0 11 11"><circle cx="5.500" cy="5.500" r="5.400" fill="#afb1b3"/><path d="M5.500 2.300V6.300M5.500 7.400V8.900" stroke="#3c3f41" stroke-width="1.500"/></svg>
<svg style="left:178px;top:635.500px" width="9" height="13" viewBox="0 0 9 13"><path d="M1.800 1.500V10.500M7 2.800C7 6.800 1.800 5.300 1.800 8.800" stroke="#afb1b3" stroke-width="1.500" fill="none"/><circle cx="1.800" cy="1.900" r="1.700" fill="#afb1b3"/><circle cx="1.800" cy="10.400" r="1.700" fill="#afb1b3"/><circle cx="7" cy="2.800" r="1.700" fill="#afb1b3"/></svg>
<svg style="left:297px;top:635px" width="13" height="13" viewBox="0 0 13 13"><path d="M10.300 4.500A5 5 0 1 0 6 10.800" fill="none" stroke="#afb1b3" stroke-width="1.400"/><path d="M5.500 2.800V6H3" stroke="#afb1b3" stroke-width="1.200" fill="none"/><path d="M7.300 5.800L12.800 9.200L7.300 12.600z" fill="#afb1b3"/></svg>
<svg style="left:373px;top:636px" width="11" height="10" viewBox="0 0 12 11" preserveAspectRatio="none"><rect x="0" y="0" width="12" height="11" fill="#afb1b3"/><path d="M2 2.500L5 5L2 7.500" stroke="#3c3f41" stroke-width="1.300" fill="none"/><path d="M6 8.300H10" stroke="#3c3f41" stroke-width="1.300"/></svg>
<svg style="left:456px;top:637px" width="10.300" height="9.500" viewBox="0 0 11 10" preserveAspectRatio="none"><path d="M0 1H2M3.500 1H11M0 5H2M3.500 5H11M0 9H2M3.500 9H11" stroke="#afb1b3" stroke-width="1.700"/></svg>
<svg style="left:522px;top:635px" width="13" height="13" viewBox="0 0 13 13"><path d="M1 5.800L6.700 1.500" stroke="#afb1b3" stroke-width="2.600" fill="none"/><path d="M4.800 3.700L11.600 11" stroke="#afb1b3" stroke-width="2.600" fill="none"/></svg>
<svg style="left:588px;top:635px" width="13" height="14" viewBox="0 0 13 14"><path d="M6.500 0.500L12.500 3.500L6.500 6.500L0.500 3.500z" fill="#afb1b3"/><path d="M0.800 6.500L6.500 9.300L12.200 6.500M0.800 9.800L6.500 12.600L12.200 9.800" stroke="#afb1b3" stroke-width="1.400" fill="none"/></svg>
<svg style="left:967px;top:635.500px" width="13" height="13" viewBox="0 0 13 13"><circle cx="6.300" cy="6.300" r="6.200" fill="#499c54"/><path d="M10 10H13V13H10z" fill="#3c3f41"/><text x="6.300" y="10" text-anchor="middle" font-family="Liberation Sans,sans-serif" font-size="10.500" fill="#fff">2</text></svg>
<svg style="left:3px;top:656px" width="12" height="12" viewBox="0 0 12 12"><rect x="2.500" y="0.500" width="9" height="9" fill="none" stroke="#afb1b3" stroke-width="1"/><path d="M0.500 2.500V11.500H9.500" fill="none" stroke="#afb1b3" stroke-width="1"/></svg>
<svg style="left:1019px;top:656px" width="12" height="11" viewBox="0 0 12 11"><path d="M1 5V3.200C1 1.500 2 0.700 3.300 0.700S5.600 1.500 5.600 3.200V5" fill="none" stroke="#afb1b3" stroke-width="1.400"/><rect x="3.500" y="4.800" width="8" height="6.200" fill="#afb1b3"/></svg>
<svg style="left:1042px;top:655px" width="16" height="15" viewBox="0 0 16 15"><path d="M3.500 10.500C1.500 10.500 0 9.200 0 7.300C0 5.600 1.200 4.400 2.800 4.200C3.300 1.800 5.200 0.300 7.500 0.300C10 0.300 12 2 12.300 4.300C13.800 4.500 15 5.800 15 7.300C15 8 14.800 8.500 14.500 9L9 10.500z" fill="#afb1b3"/><text x="7.500" y="8.500" text-anchor="middle" font-family="Liberation Sans,sans-serif" font-weight="bold" font-size="8.500" fill="#3c3f41">?</text><circle cx="12" cy="11.500" r="3.800" fill="#3c3f41"/><g transform="translate(12 11.500)" fill="#afb1b3"><circle r="2.300"/><rect x="-0.700" y="-3.300" width="1.400" height="6.600"/><rect x="-0.700" y="-3.300" width="1.400" height="6.600" transform="rotate(60)"/><rect x="-0.700" y="-3.300" width="1.400" height="6.600" transform="rotate(120)"/></g><circle cx="12" cy="11.500" r="0.900" fill="#3c3f41"/></svg>
<span class="t" style="left:45.9px;top:634px;font-size:12px;letter-spacing:-0.411px;color:#bbbbbb">Find</span>
<span class="t" style="left:105.6px;top:634px;font-size:12px;letter-spacing:-0.286px;color:#bbbbbb">Problems</span>
<span class="t" style="left:193.0px;top:634px;font-size:12px;letter-spacing:-0.083px;color:#bbbbbb">Version Control</span>
<span class="t" style="left:314.6px;top:634px;font-size:12px;letter-spacing:-0.077px;color:#bbbbbb">Profiler</span>
<span class="t" style="left:388.7px;top:634px;font-size:12px;letter-spacing:-0.132px;color:#bbbbbb">Terminal</span>
<span class="t" style="left:471.5px;top:634px;font-size:12px;letter-spacing:-0.813px;color:#bbbbbb">TODO</span>
<span class="t" style="left:540.0px;top:634px;font-size:12px;letter-spacing:-0.258px;color:#bbbbbb">Build</span>
<span class="t" style="left:605.6px;top:634px;font-size:12px;letter-spacing:-0.267px;color:#bbbbbb">Python Packages</span>
<span class="t" style="left:984.6px;top:634px;font-size:12px;letter-spacing:-0.405px;color:#bbbbbb">Event Log</span>
<span class="t" style="left:836.0px;top:654px;font-size:12.5px;letter-spacing:-0.461px;color:#bbbbbb">9:23</span>
<span class="t" style="left:871.4px;top:654px;font-size:12.5px;letter-spacing:-1.264px;color:#bbbbbb">CRLF</span>
<span class="t" style="left:911.5px;top:654px;font-size:12.5px;letter-spacing:-0.524px;color:#bbbbbb">UTF-8</span>
<span class="t" style="left:957.3px;top:654px;font-size:12.5px;letter-spacing:-0.004px;color:#bbbbbb">4 spaces</span>
<span class="t" style="left:24.8px;top:654px;font-size:13px;letter-spacing:-0.015px;color:#bbbbbb">Localized IntelliJ IDEA 2021.3.3 is available // Switch and restart (53 minutes ago)</span>
</body></html>
